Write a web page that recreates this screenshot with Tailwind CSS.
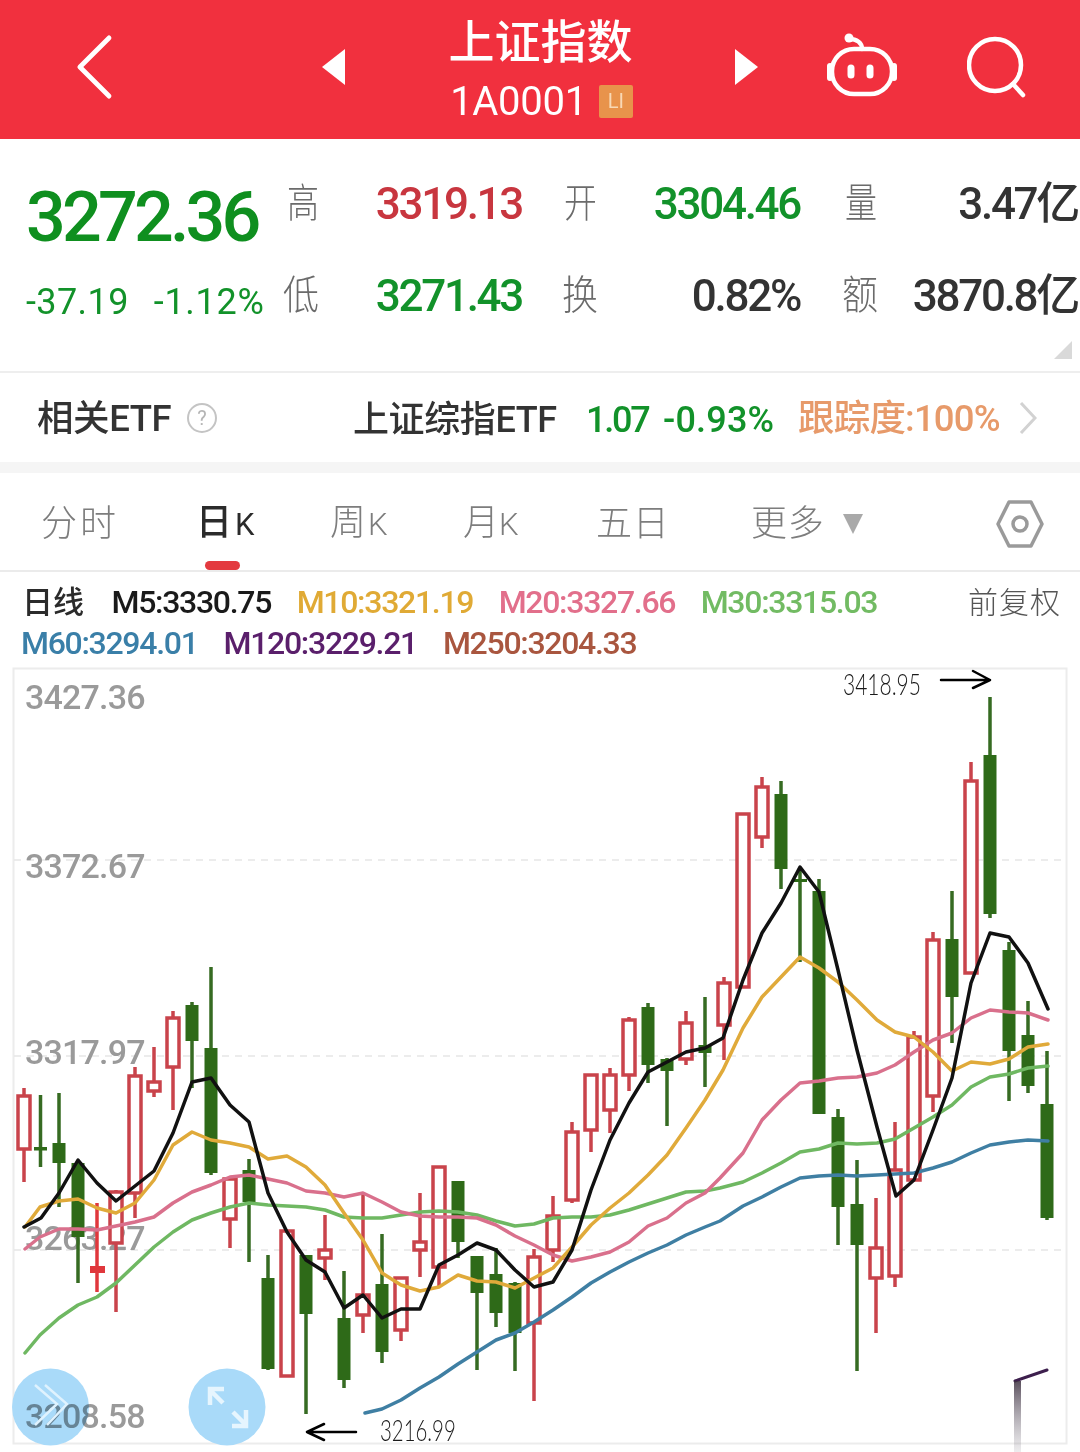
<!DOCTYPE html>
<html lang="zh">
<head>
<meta charset="utf-8">
<script src="https://cdn.jsdelivr.net/npm/@tailwindcss/browser@4"></script>
</head>
<body class="bg-white font-['Roboto','Noto_Sans_CJK_SC',sans-serif] overflow-hidden">
<div class="w-[1080px] h-[1452px] flex flex-col">

  <!-- header -->
  <header class="h-[139px] shrink-0 bg-[#f1303e] flex items-center pl-[76px] text-white">
    <svg class="w-[40px] h-[70px] -mt-[6px]" viewBox="0 0 40 70" fill="none" stroke="#fff" stroke-width="5" stroke-linecap="round" stroke-linejoin="round"><path d="M34 6 4 35l30 29" transform="matrix(.97 0 0 1 0 0)"/></svg>
    <svg class="w-[24px] h-[36px] ml-[206px] -mt-[5px]" viewBox="0 0 24 36"><path d="M23 0V36L0 18z" fill="#fff"/></svg>
    <div class="w-[389px] flex flex-col items-center -mt-[3px]">
      <div class="text-[46px] leading-[52px] font-medium">上证指数</div>
      <div class="flex items-center gap-[12px] mt-[15px] pl-[2px]">
        <span class="text-[40px] leading-[38px] tracking-[-.3px]">1A0001</span>
        <span class="w-[34px] h-[33px] bg-[#e8934b] rounded-[2px] text-[20px] leading-[33px] text-center text-[#f8d9b5]">LI</span>
      </div>
    </div>
    <svg class="w-[24px] h-[36px] -mt-[5px]" viewBox="0 0 24 36"><path d="M0 0V36L23 18z" fill="#fff"/></svg>
    <svg class="w-[72px] h-[68px] ml-[67px] -mt-[5px]" viewBox="0 0 72 68" fill="none" stroke="#fff" stroke-width="4.5" stroke-linecap="round"><circle cx="23" cy="5" r="4.5" fill="#fff" stroke="none"/><path d="M23 6c8 0 13 4 13 10"/><rect x="6" y="16" width="60" height="45" rx="22"/><path d="M4 33v12M68 33v12" stroke-width="6"/><path d="M25 35v7M44 35v7" stroke-width="7"/></svg>
    <svg class="w-[64px] h-[64px] ml-[69px] -mt-[6px]" viewBox="0 0 64 64" fill="none" stroke="#fff" stroke-width="4.5" stroke-linecap="round"><circle cx="28" cy="30" r="26"/><path d="M46 49l10 11"/></svg>
  </header>

  <!-- quote -->
  <section class="h-[234px] shrink-0 relative flex pt-[19px] border-b-2 border-[#eeeeee]">
    <div class="w-[287px] shrink-0 pl-[26px] text-[#12922a]">
      <div class="h-[118px] leading-[118px] text-[70px] font-medium tracking-[-3.8px] text-[#0f8f1f]">3272.36</div>
      <div class="h-[52px] leading-[52px] text-[36px] flex gap-[25px] tracking-[.4px]"><span>-37.19</span><span class="tracking-[.7px]">-1.12%</span></div>
    </div>
    <div class="grid grid-cols-[40px_195px_82px_196px_85px_193px] grid-rows-[92px_92px] items-center text-[44px] font-medium tracking-[-2.3px] h-[184px]">
      <span class="text-[#6b6b6b] font-light text-[40px] tracking-normal"><b class="inline-block font-light scale-x-[.8] origin-left">高</b></span>
      <span class="text-right text-[#c8363f]">3319.13</span>
      <span class="pl-[42px] text-[#6b6b6b] font-light text-[40px] tracking-normal"><b class="inline-block font-light scale-x-[.82] origin-left">开</b></span>
      <span class="text-right text-[#12922a]">3304.46</span>
      <span class="pl-[45px] text-[#6b6b6b] font-light text-[40px] tracking-normal"><b class="inline-block font-light scale-x-[.8] origin-left">量</b></span>
      <span class="text-right text-[#333333]">3.47亿</span>
      <span class="-ml-[4px] text-[#6b6b6b] font-light text-[40px] tracking-normal"><b class="inline-block font-light scale-x-[.9] origin-left">低</b></span>
      <span class="text-right text-[#12922a]">3271.43</span>
      <span class="pl-[40px] text-[#6b6b6b] font-light text-[40px] tracking-normal"><b class="inline-block font-light scale-x-[.9] origin-left">换</b></span>
      <span class="text-right text-[#333333]">0.82%</span>
      <span class="pl-[42px] text-[#6b6b6b] font-light text-[40px] tracking-normal"><b class="inline-block font-light scale-x-[.9] origin-left">额</b></span>
      <span class="text-right text-[#333333]">3870.8亿</span>
    </div>
    <svg class="absolute right-[8px] bottom-[12px] w-[18px] h-[18px]" viewBox="0 0 18 18"><path d="M18 0V18H0z" fill="#d9d9d9"/></svg>
  </section>

  <!-- ETF row -->
  <section class="h-[89px] shrink-0 flex items-center pl-[37px] pt-[4px] text-[#333333]">
    <span class="text-[36.5px] font-medium tracking-[-.4px] w-[135px] whitespace-nowrap">相关ETF</span>
    <span class="ml-[15px] -mt-[4px] w-[30px] h-[30px] rounded-full border-2 border-[#c4c4c4] text-[#b5b5b5] text-[20px] leading-[26px] text-center">?</span>
    <span class="ml-[136px] text-[36px] font-medium tracking-[-.4px] w-[206px] whitespace-nowrap">上证综指ETF</span>
    <span class="ml-[27px] text-[36px] font-medium tracking-[-2.2px] text-[#12922a] w-[61px]">1.07</span>
    <span class="ml-[16px] text-[36px] font-medium tracking-[.2px] text-[#12922a] w-[110px] whitespace-nowrap">-0.93%</span>
    <span class="ml-[25px] text-[36.5px] font-medium tracking-[-.8px] text-[#e79a6a] w-[201px] whitespace-nowrap">跟踪度:100%</span>
    <svg class="ml-[20px] -mt-[4px] w-[18px] h-[32px]" viewBox="0 0 18 32" fill="none" stroke="#d2d2d2" stroke-width="3"><path d="M2 1l14 15L2 31"/></svg>
  </section>
  <div class="h-[11px] shrink-0 bg-[#f5f5f5]"></div>

  <!-- tabs -->
  <nav class="h-[99px] shrink-0 relative flex items-center pt-[4px] border-b-2 border-[#ebebeb] text-[36px] leading-[44px] text-[#7d7d7d] font-light">
    <span class="ml-[41px] w-[75px] tracking-[3px] whitespace-nowrap">分时</span>
    <span class="ml-[80px] w-[56px] text-[#2b2b2b] font-medium whitespace-nowrap">日<span class="ml-[3px] text-[31px] font-normal">K</span></span>
    <span class="ml-[78px] w-[55px] whitespace-nowrap">周<span class="ml-[2px] text-[31px]">K</span></span>
    <span class="ml-[78px] w-[53px] whitespace-nowrap">月<span class="text-[31px]">K</span></span>
    <span class="ml-[80px] w-[68px] whitespace-nowrap tracking-[-4px]">五 日</span>
    <span class="ml-[87px] w-[71px] whitespace-nowrap tracking-[-4px]">更 多</span>
    <svg class="ml-[21px] w-[20px] h-[20px]" viewBox="0 0 20 20"><path d="M0 0H20L10 20z" fill="#a9a9a9"/></svg>
    <svg class="ml-[133px] w-[48px] h-[48px]" viewBox="0 0 48 48" fill="none" stroke="#9a9a9a" stroke-width="3.5"><path d="M13 2h22l11 22-11 22H13L2 24z" stroke-linejoin="round"/><circle cx="24" cy="24" r="7"/></svg>
    <span class="absolute left-[205px] bottom-[0px] w-[35px] h-[9px] rounded-full bg-[#e33a3f]"></span>
  </nav>

  <!-- legend -->
  <section class="h-[94px] shrink-0 text-[32px] font-medium leading-[41px] tracking-[-1.3px] pl-[22px] pt-[10px]">
    <div class="flex items-center gap-[25.5px] whitespace-nowrap relative">
      <span class="text-[#2b2b2b] text-[31px] tracking-normal w-[64px]">日线</span>
      <span class="text-[#1a1a1a]">M5:3330.75</span>
      <span class="text-[#e0aa35]">M10:3321.19</span>
      <span class="text-[#e26f8b]">M20:3327.66</span>
      <span class="text-[#72bb63]">M30:3315.03</span>
      <span class="absolute left-[946px] text-[30px] font-light text-[#555555] tracking-[1px]">前复权</span>
    </div>
    <div class="flex items-center gap-[26px] whitespace-nowrap -ml-[1px]">
      <span class="text-[#3a7fa8]">M60:3294.01</span>
      <span class="text-[#5a1f6b]">M120:3229.21</span>
      <span class="text-[#a9563f]">M250:3204.33</span>
    </div>
  </section>

  <!-- chart -->
  <svg class="block w-[1080px] h-[786px] shrink-0" viewBox="0 666 1080 786" fill="none">
    <defs>
      <linearGradient id="fade" x1="0" y1="0" x2="0" y2="1"><stop offset="0" stop-color="#3d3040" stop-opacity=".85"/><stop offset="1" stop-color="#8a8590" stop-opacity=".15"/></linearGradient>
    </defs>
    <rect x="13.5" y="668.5" width="1053" height="775" stroke="#ececec" stroke-width="2"/>
    <path d="M14 860H1066M14 1056H1066M14 1250H1066" stroke="#e6e6e6" stroke-width="1.5" stroke-dasharray="7 6"/>
    <g fill="#9a9a9a" font-size="34" font-weight="500" letter-spacing="-.8">
      <text x="25" y="709">3427.36</text>
      <text x="25" y="878">3372.67</text>
      <text x="25" y="1064">3317.97</text>
      <text x="25" y="1250">3263.27</text>
    </g>

    <!-- red candles -->
    <path stroke="#c9434b" stroke-width="3.5" d="M24 1088V1096M24 1149V1182M116 1190V1192M116 1243V1312M135 1067V1076M135 1193V1218M154 1047V1082M154 1091V1097M173 1011V1018M173 1067V1110M230 1219V1248M325 1215V1250M325 1258V1280M363 1192V1295M363 1315V1333M401 1330V1341M420 1193V1242M420 1250V1277M439 1267V1287M534 1249V1257M534 1323V1401M553 1196V1216M553 1250V1262M572 1122V1132M572 1200V1203M591 1130V1152M610 1068V1075M610 1110V1133M629 1017V1020M629 1075V1091M686 1011V1023M686 1059V1065M724 977V983M724 1025V1060M762 777V787M762 837V848M876 1198V1248M876 1278V1333M895 1122V1170M895 1276V1287M914 1031V1037M933 932V940M933 1096V1112M971 762V781"/>
    <path stroke="#c9434b" stroke-width="3.5" fill="#fff" d="M18 1096h12v53h-12zM110 1192h12v51h-12zM129 1076h12v117h-12zM148 1082h12v9h-12zM167 1018h12v49h-12zM224 1179h12v40h-12zM281 1231h12v145h-12zM319 1250h12v8h-12zM357 1295h12v20h-12zM395 1278h12v52h-12zM414 1242h12v8h-12zM433 1167h12v100h-12zM528 1257h12v66h-12zM547 1216h12v34h-12zM566 1132h12v68h-12zM585 1075h12v55h-12zM604 1075h12v35h-12zM623 1020h12v55h-12zM680 1023h12v36h-12zM718 983h12v42h-12zM737 814h12v173h-12zM756 787h12v50h-12zM870 1248h12v30h-12zM889 1170h12v106h-12zM908 1037h12v143h-12zM927 940h12v156h-12zM965 781h12v192h-12z"/>
    <path stroke="#e0373c" stroke-width="3.5" d="M97 1203V1292"/>
    <rect x="90" y="1266" width="15" height="7" fill="#e0373c"/>

    <!-- green candles -->
    <path stroke="#366b22" stroke-width="3.5" d="M40.5 1095V1167M59 1093V1207M78 1160V1283M192 1002V1088M211 967V1175M249 1159V1262M268 1255V1370M306 1255V1414M344 1271V1388M382 1234V1363M458 1181V1258M477 1256V1370M496 1248V1327M515 1282V1371M648 1003V1083M667 1058V1126M705 997V1087M781 781V889M800 870V962M819 879V1114M838 1109V1245M857 1160V1371M952 891V1043M990 697V918M1009 942V1101M1028 1001V1093M1047 1051V1220"/>
    <g fill="#2e6a18">
      <rect x="34" y="1147" width="13" height="3.5"/>
      <rect x="793" y="879" width="14" height="3"/>
      <rect x="52.5" y="1143" width="13" height="20"/>
      <rect x="71.5" y="1163" width="13" height="74"/>
      <rect x="185.5" y="1005" width="13" height="36"/>
      <rect x="204.5" y="1048" width="13" height="125"/>
      <rect x="242.5" y="1170" width="13" height="32"/>
      <rect x="261.5" y="1278" width="13" height="91"/>
      <rect x="299.5" y="1255" width="13" height="59"/>
      <rect x="337.5" y="1318" width="13" height="62"/>
      <rect x="375.5" y="1284" width="13" height="68"/>
      <rect x="451.5" y="1181" width="13" height="61"/>
      <rect x="470.5" y="1256" width="13" height="37"/>
      <rect x="489.5" y="1274" width="13" height="39"/>
      <rect x="508.5" y="1283" width="13" height="50"/>
      <rect x="641.5" y="1007" width="13" height="58"/>
      <rect x="660.5" y="1059" width="13" height="12"/>
      <rect x="698.5" y="1045" width="13" height="8"/>
      <rect x="774.5" y="794" width="13" height="75"/>
      <rect x="812.5" y="891" width="13" height="223"/>
      <rect x="831.5" y="1117" width="13" height="90"/>
      <rect x="850.5" y="1204" width="13" height="41"/>
      <rect x="945.5" y="939" width="13" height="58"/>
      <rect x="983.5" y="755" width="13" height="159"/>
      <rect x="1002.5" y="950" width="13" height="101"/>
      <rect x="1021.5" y="1035" width="13" height="51"/>
      <rect x="1040.5" y="1104" width="13" height="114"/>
    </g>

    <!-- moving averages -->
    <g stroke-width="3.5" stroke-linejoin="round" stroke-linecap="round">
      <polyline stroke="#6fb862" points="25,1353 40,1335 59,1318 78,1305 97,1297 116,1283 135,1265 154,1247 173,1232 192,1220 211,1213 230,1207 249,1203 268,1205 287,1206 306,1207 325,1210 344,1217 363,1218 382,1218 401,1215 420,1212 439,1211 458,1212 477,1215 496,1221 515,1226 534,1224 553,1218 572,1217 591,1217 610,1215 629,1210 648,1204 667,1198 686,1192 705,1191 720,1188 743,1182 762,1173 781,1163 800,1152 819,1149 838,1143 857,1144 877,1143 895,1139 914,1128 933,1117 952,1105 971,1087 990,1077 1009,1074 1028,1068 1048,1066"/>
      <polyline stroke="#3f7fa3" points="365,1413 382,1409 401,1400 420,1388 439,1377 458,1364 477,1352 496,1340 515,1333 534,1322 553,1310 572,1297 591,1283 610,1272 629,1262 648,1253 667,1245 686,1235 705,1227 720,1221 743,1206 762,1197 781,1187 800,1178 819,1176 838,1175 857,1176 877,1175 895,1174 914,1173 933,1168 952,1162 971,1153 990,1145 1009,1142 1028,1140 1048,1141"/>
      <polyline stroke="#d9708c" points="25,1249 40,1237 59,1229 78,1229 97,1230 116,1226 135,1222 154,1217 173,1203 192,1192 211,1185 230,1177 249,1175 268,1179 287,1183 306,1191 325,1193 344,1197 363,1193 382,1202 401,1212 420,1216 439,1217 458,1217 477,1218 496,1225 515,1236 534,1245 553,1255 572,1261 591,1257 610,1252 629,1242 648,1226 667,1218 686,1203 705,1193 720,1178 743,1153 762,1120 781,1100 800,1083 819,1081 838,1078 857,1077 877,1073 895,1065 914,1052 933,1040 952,1033 971,1018 990,1010 1009,1012 1028,1013 1048,1020"/>
      <polyline stroke="#e0aa3a" points="25,1227 40,1207 59,1201 78,1199 97,1208 116,1213 135,1203 154,1180 173,1145 192,1132 211,1140 230,1143 249,1147 268,1159 287,1156 306,1167 325,1185 344,1213 363,1240 382,1273 401,1285 420,1291 439,1287 458,1275 477,1281 496,1282 515,1288 534,1278 553,1268 572,1247 591,1225 610,1208 629,1193 648,1175 667,1155 686,1128 705,1100 723,1070 743,1028 762,997 781,977 800,957 819,968 838,982 857,1000 877,1020 895,1032 914,1037 933,1052 952,1071 971,1062 990,1064 1009,1059 1028,1047 1048,1044"/>
      <polyline stroke="#111111" points="24,1227 41,1218 59,1193 78,1160 97,1183 116,1201 135,1186 154,1171 173,1133 192,1082 211,1078 230,1105 249,1122 268,1193 287,1232 306,1260 325,1272 344,1308 363,1295 382,1318 401,1309 420,1309 439,1265 458,1255 477,1243 496,1250 515,1270 534,1287 553,1282 572,1250 591,1190 610,1140 629,1103 648,1072 667,1062 686,1052 705,1048 723,1038 743,980 762,933 781,903 800,867 819,892 838,970 857,1050 877,1127 896,1196 914,1180 933,1130 952,1078 971,983 990,933 1009,937 1028,963 1048,1009"/>
      <path stroke="#3d1f4d" stroke-width="3" d="M1015 1381 1047 1370"/>
    </g>
    <rect x="1014" y="1381" width="7" height="71" fill="url(#fade)"/>

    <!-- annotations -->
    <g fill="#1a1a1a" font-size="30" font-family="Lato" font-weight="300">
      <text transform="translate(843 695) scale(.7 1)">3418.95</text>
      <text transform="translate(380 1441) scale(.68 1)">3216.99</text>
    </g>
    <path stroke="#000" stroke-width="2.5" stroke-linecap="round" stroke-linejoin="round" d="M941 680H990M973 671 990 680 973 688M356 1432H307M324 1424 307 1432 324 1440"/>

    <!-- floating buttons -->
    <circle cx="50.5" cy="1407" r="38.5" fill="#a9daf9"/>
    <circle cx="227" cy="1407" r="38.5" fill="#a9daf9"/>
    <text x="25" y="1428" fill="#9a9a9a" font-size="34" font-weight="500" letter-spacing="-.8" class="mix-blend-multiply">3208.58</text>
    <path stroke="#dff2fe" stroke-width="2.5" d="M35 1385 57 1404 35 1425M45 1385 67 1404 47 1425"/>
    <path stroke="#e6f5fe" stroke-width="4.5" d="M211 1391 223 1403M233 1412 245 1424M210 1405V1389H224M246 1410V1426H232"/>
  </svg>
</div>
</body>
</html>
